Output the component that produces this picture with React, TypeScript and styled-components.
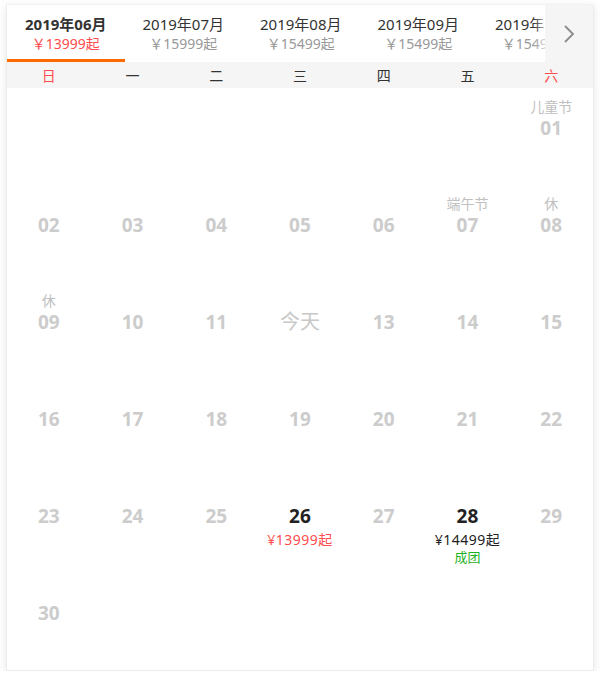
import React from 'react';
import styled, { createGlobalStyle } from 'styled-components';

const GlobalStyle = createGlobalStyle`
    body {
        margin: 0;
        background: #fff;
        font-family: "Noto Sans", "Noto Sans CJK SC", sans-serif;
    }
`;

type Month = { title: string; price: string };
type Day = {
    num?: string;
    label?: string;
    today?: boolean;
    active?: boolean;
    price?: string;
    priceDark?: boolean;
    group?: string;
};

const months: Month[] = [
    { title: '2019年06月', price: '￥13999起' },
    { title: '2019年07月', price: '￥15999起' },
    { title: '2019年08月', price: '￥15499起' },
    { title: '2019年09月', price: '￥15499起' },
    { title: '2019年10月', price: '￥15499起' },
];

const weekdays = ['日', '一', '二', '三', '四', '五', '六'];

const days: Day[] = [
    {}, {}, {}, {}, {}, {},
    { num: '01', label: '儿童节' },
    { num: '02' }, { num: '03' }, { num: '04' }, { num: '05' }, { num: '06' },
    { num: '07', label: '端午节' }, { num: '08', label: '休' },
    { num: '09', label: '休' }, { num: '10' }, { num: '11' }, { today: true },
    { num: '13' }, { num: '14' }, { num: '15' },
    { num: '16' }, { num: '17' }, { num: '18' }, { num: '19' }, { num: '20' },
    { num: '21' }, { num: '22' },
    { num: '23' }, { num: '24' }, { num: '25' },
    { num: '26', active: true, price: '¥13999起' },
    { num: '27' },
    { num: '28', active: true, price: '¥14499起', priceDark: true, group: '成团' },
    { num: '29' },
    { num: '30' }, {}, {}, {}, {}, {}, {},
];

const App = () => {
    return (
        <Page>
            <GlobalStyle />
            <Card>
                <MonthBar>
                    <MonthTrack>
                        {months.map((m, i) => (
                            <MonthTab key={m.title} $active={i === 0}>
                                <MonthTitle $active={i === 0}>{m.title}</MonthTitle>
                                <MonthPrice $active={i === 0}>{m.price}</MonthPrice>
                            </MonthTab>
                        ))}
                    </MonthTrack>
                    <NextButton>
                        <svg width="14" height="22" viewBox="0 0 14 22">
                            <path d="M3 3 L11 11 L3 19" fill="none" stroke="#8a8a8a" strokeWidth="1.8" />
                        </svg>
                    </NextButton>
                </MonthBar>
                <WeekRow>
                    {weekdays.map((w, i) => (
                        <WeekDay key={w} $weekend={i === 0 || i === 6}>{w}</WeekDay>
                    ))}
                </WeekRow>
                <DayGrid>
                    {days.map((d, i) => (
                        <Cell key={i}>
                            <Label>{d.label}</Label>
                            {d.today ? <Today>今天</Today> : <Num $active={d.active}>{d.num}</Num>}
                            {d.price && <Price $dark={d.priceDark}>{d.price}</Price>}
                            {d.group && <Group>{d.group}</Group>}
                        </Cell>
                    ))}
                </DayGrid>
            </Card>
        </Page>
    );
};

export default App;

const Page = styled.div`
    padding: 4px 6px 0;
`;

const Card = styled.div`
    width: 588px;
    box-sizing: border-box;
    border: 1px solid #ececec;
    border-top-color: #f2f2f2;
    box-shadow: 0 2px 8px rgba(0, 0, 0, 0.1);
    background: #fff;
`;

const MonthBar = styled.div`
    position: relative;
    height: 57px;
    overflow: hidden;
`;

const MonthTrack = styled.div`
    display: flex;
    height: 100%;
`;

const MonthTab = styled.div<{ $active?: boolean }>`
    flex: 0 0 117.5px;
    display: flex;
    flex-direction: column;
    align-items: center;
    justify-content: center;
    box-sizing: border-box;
    padding-top: 4px;
    border-bottom: 3px solid ${p => (p.$active ? '#ff6a00' : 'transparent')};
`;

const MonthTitle = styled.div<{ $active?: boolean }>`
    font-size: 15px;
    line-height: 20px;
    color: #333;
    font-weight: ${p => (p.$active ? 700 : 400)};
`;

const MonthPrice = styled.div<{ $active?: boolean }>`
    font-size: 14px;
    line-height: 20px;
    color: ${p => (p.$active ? '#ff4d4d' : '#999')};
`;

const NextButton = styled.div`
    position: absolute;
    top: 0;
    right: 0;
    width: 48px;
    height: 57px;
    display: flex;
    align-items: center;
    justify-content: center;
    background: #f5f5f5;
    box-shadow: -6px 0 8px rgba(255, 255, 255, 0.6);
`;

const WeekRow = styled.div`
    display: grid;
    grid-template-columns: repeat(7, 1fr);
    height: 26px;
    background: #f5f5f5;
`;

const WeekDay = styled.div<{ $weekend?: boolean }>`
    display: flex;
    align-items: center;
    justify-content: center;
    font-size: 14px;
    color: ${p => (p.$weekend ? '#ff4d4d' : '#333')};
`;

const DayGrid = styled.div`
    display: grid;
    grid-template-columns: repeat(7, 1fr);
    grid-auto-rows: 97px;
`;

const Cell = styled.div`
    display: flex;
    flex-direction: column;
    align-items: center;
    padding-top: 10px;
`;

const Label = styled.div`
    height: 18px;
    font-size: 14px;
    line-height: 18px;
    color: #c0c0c0;
`;

const Num = styled.div<{ $active?: boolean }>`
    height: 24px;
    font-size: 19px;
    line-height: 24px;
    font-weight: 700;
    color: ${p => (p.$active ? '#222' : '#ccc')};
`;

const Today = styled.div`
    height: 24px;
    font-size: 20px;
    line-height: 24px;
    color: #c8c8c8;
`;

const Price = styled.div<{ $dark?: boolean }>`
    margin-top: 4px;
    font-size: 14px;
    line-height: 16px;
    letter-spacing: 0.5px;
    color: ${p => (p.$dark ? '#222' : '#ff4d4d')};
`;

const Group = styled.div`
    margin-top: 1px;
    font-size: 13px;
    line-height: 17px;
    color: #1fb41f;
`;
